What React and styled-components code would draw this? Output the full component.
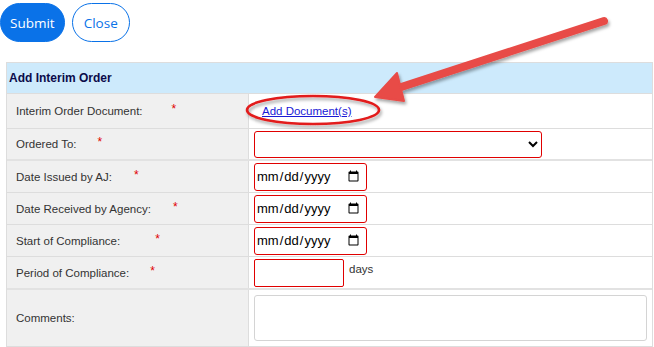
import styled, { createGlobalStyle } from "styled-components";

const GlobalStyle = createGlobalStyle`
  body {
    margin: 0;
    background: #fff;
    font-family: "Liberation Sans", Arial, sans-serif;
  }
`;

const Page = styled.div`
  position: relative;
  width: 654px;
  height: 347px;
  overflow: hidden;
`;

const Toolbar = styled.div`
  display: flex;
  gap: 7px;
  padding-top: 3px;
`;

const Button = styled.button`
  height: 39px;
  padding: 0 ${(p) => (p.$primary ? "9px" : "11px")};
  border-radius: 20px;
  border: 1px solid #0a72e8;
  background: ${(p) => (p.$primary ? "#0a72e8" : "#fff")};
  color: ${(p) => (p.$primary ? "#fff" : "#0a72e8")};
  font-family: "Open Sans", "Noto Sans", sans-serif;
  font-size: 13.5px;
  cursor: pointer;
`;

const Table = styled.div`
  margin: 20px 0 0 6px;
  width: 647px;
  border: 1px solid #ddd;
  box-sizing: border-box;
`;

const Header = styled.div`
  height: 30px;
  display: flex;
  align-items: center;
  padding-left: 2px;
  background: #cdeafc;
  border-bottom: 1px solid #ddd;
  color: #0b0b4a;
  font-weight: bold;
  font-size: 12px;
`;

const Group = styled.div`
  border-top: ${(p) => (p.$first ? "none" : "2px solid #e2e2e2")};
`;

const Row = styled.div`
  display: grid;
  grid-template-columns: 242px 1fr;
  height: ${(p) => p.$h}px;
  border-bottom: ${(p) => (p.$last ? "none" : "1px solid #ddd")};
`;

const Label = styled.div`
  display: flex;
  align-items: center;
  padding-left: 9px;
  background: #f0f0f0;
  border-right: 1px solid #ddd;
  color: #333;
  font-size: 11.5px;
`;

const Star = styled.span`
  color: #e00000;
  font-size: 12px;
  margin-left: ${(p) => p.$gap}px;
  position: relative;
  top: -2px;
`;

const Value = styled.div`
  display: flex;
  align-items: ${(p) => (p.$top ? "flex-start" : "center")};
  padding: ${(p) => (p.$top ? "2px 5px 0" : "0 5px")};
  gap: 5px;
  font-size: 11.5px;
  color: #333;
`;

const Link = styled.a`
  margin-left: 8px;
  color: #1a1ad6;
  text-decoration: underline;
  font-size: 11.5px;
  cursor: pointer;
`;

const Select = styled.select`
  width: 288px;
  height: 27px;
  border: 1px solid #e00000;
  border-radius: 3px;
  background: #fff;
`;

const DateInput = styled.input`
  width: 113px;
  height: 28px;
  box-sizing: border-box;
  padding: 0 4px 0 1px;
  border: 1px solid #e00000;
  border-radius: 3px;
  font-family: "Liberation Sans", Arial, sans-serif;
  font-size: 13px;
  color: #000;
`;

const TextInput = styled.input`
  width: 90px;
  height: 28px;
  box-sizing: border-box;
  border: 1px solid #e00000;
  border-radius: 2px;
`;

const Days = styled.span`
  padding-top: 4px;
`;

const TextArea = styled.textarea`
  width: 393px;
  height: 46px;
  box-sizing: border-box;
  border: 1px solid #d4d4d4;
  border-radius: 3px;
  resize: none;
`;

const Overlay = styled.svg`
  position: absolute;
  left: 0;
  top: 0;
  pointer-events: none;
`;

const Annotation = () => (
  <Overlay width="654" height="347" viewBox="0 0 654 347">
    <defs>
      <filter id="sh" x="-20%" y="-40%" width="140%" height="180%">
        <feDropShadow dx="1.5" dy="2.5" stdDeviation="1.6" floodColor="#000" floodOpacity="0.35" />
      </filter>
    </defs>
    <ellipse cx="313" cy="110" rx="66" ry="14" fill="none" stroke="#e21c1c" strokeWidth="2.6" filter="url(#sh)" />
    <g filter="url(#sh)" fill="#e84b47" stroke="#e84b47">
      <line x1="604" y1="21" x2="392" y2="90" strokeWidth="8" strokeLinecap="round" />
      <polygon points="375,97 397,73 404,101" strokeWidth="2" strokeLinejoin="round" />
    </g>
  </Overlay>
);

const rows = [
  { label: "Date Issued by AJ:", gap: 22 },
  { label: "Date Received by Agency:", gap: 22 },
  { label: "Start of Compliance:", gap: 35 },
];

export default function App() {
  return (
    <Page>
      <GlobalStyle />
      <Toolbar>
        <Button $primary>Submit</Button>
        <Button>Close</Button>
      </Toolbar>
      <Table>
        <Header>Add Interim Order</Header>
        <Group $first>
          <Row $h={34}>
            <Label>
              Interim Order Document:<Star $gap={29}>*</Star>
            </Label>
            <Value>
              <Link>Add Document(s)</Link>
            </Value>
          </Row>
          <Row $h={30} $last>
            <Label>
              Ordered To:<Star $gap={21}>*</Star>
            </Label>
            <Value>
              <Select>
                <option></option>
              </Select>
            </Value>
          </Row>
        </Group>
        <Group>
          {rows.map((r) => (
            <Row $h={31} key={r.label}>
              <Label>
                {r.label}
                <Star $gap={r.gap}>*</Star>
              </Label>
              <Value>
                <DateInput type="date" />
              </Value>
            </Row>
          ))}
          <Row $h={31} $last>
            <Label>
              Period of Compliance:<Star $gap={21}>*</Star>
            </Label>
            <Value $top>
              <TextInput type="text" />
              <Days>days</Days>
            </Value>
          </Row>
        </Group>
        <Group>
          <Row $h={56} $last>
            <Label>Comments:</Label>
            <Value>
              <TextArea />
            </Value>
          </Row>
        </Group>
      </Table>
      <Annotation />
    </Page>
  );
}
